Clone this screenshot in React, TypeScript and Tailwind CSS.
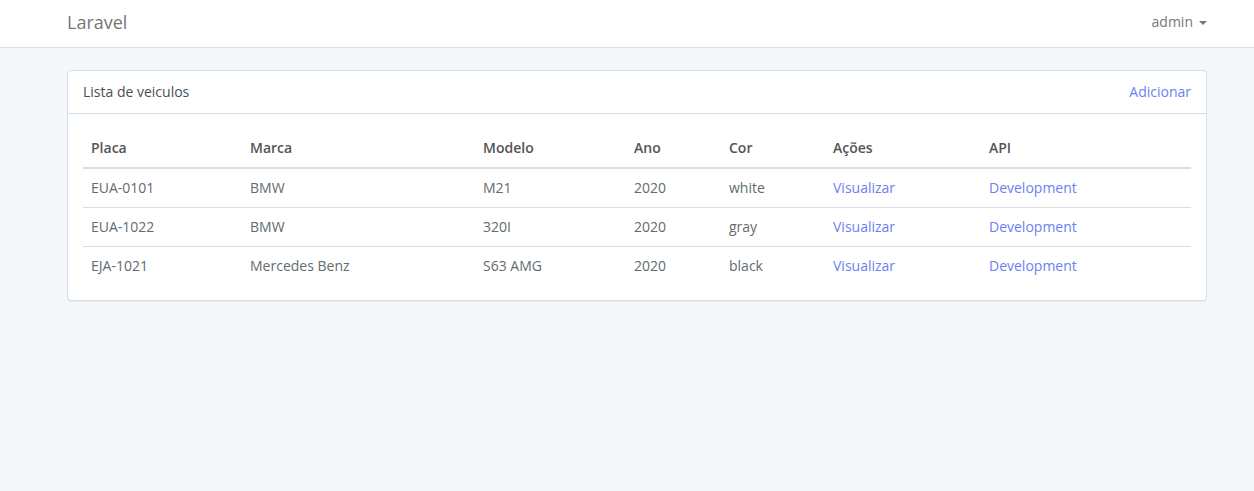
import React from "react";

const veiculos = [
  { placa: "EUA-0101", marca: "BMW", modelo: "M21", ano: "2020", cor: "white" },
  { placa: "EUA-1022", marca: "BMW", modelo: "320I", ano: "2020", cor: "gray" },
  { placa: "EJA-1021", marca: "Mercedes Benz", modelo: "S63 AMG", ano: "2020", cor: "black" },
];

const App = () => {
  return (
    <div className="min-h-[491px] bg-[#f5f8fa] text-[14px] leading-[22px] text-[#636b6f] font-['Open_Sans',sans-serif]">
      <nav className="h-[48px] bg-white border-b border-[#d3e0e9]">
        <div className="ml-[67px] w-[1140px] h-[47px] pb-[4px] flex items-center justify-between">
          <a className="text-[18px] text-[#777]">Laravel</a>
          <a className="flex items-center gap-[6px] text-[#777]">
            admin
            <span className="w-0 h-0 border-x-[4px] border-x-transparent border-t-[4px] border-t-[#777] mt-[2px]" />
          </a>
        </div>
      </nav>

      <div className="ml-[67px] w-[1140px] mt-[22px]">
        <div className="bg-white border border-[#d3e0e9] rounded-[4px] shadow-[0_1px_1px_rgba(0,0,0,0.05)]">
          <div className="h-[43px] px-[15px] flex items-center justify-between border-b border-[#d3e0e9] text-[#4a4f52]">
            <span>Lista de veiculos</span>
            <a className="text-[#6b7ff2]">Adicionar</a>
          </div>
          <div className="p-[15px]">
            <table className="w-full border-collapse text-left">
              <thead>
                <tr className="text-[#555]">
                  <th className="w-[159px] px-[8px] py-[8px] font-semibold border-b-2 border-[#ddd]">Placa</th>
                  <th className="w-[233px] px-[8px] py-[8px] font-semibold border-b-2 border-[#ddd]">Marca</th>
                  <th className="w-[151px] px-[8px] py-[8px] font-semibold border-b-2 border-[#ddd]">Modelo</th>
                  <th className="w-[95px] px-[8px] py-[8px] font-semibold border-b-2 border-[#ddd]">Ano</th>
                  <th className="w-[104px] px-[8px] py-[8px] font-semibold border-b-2 border-[#ddd]">Cor</th>
                  <th className="w-[156px] px-[8px] py-[8px] font-semibold border-b-2 border-[#ddd]">Ações</th>
                  <th className="px-[8px] py-[8px] font-semibold border-b-2 border-[#ddd]">API</th>
                </tr>
              </thead>
              <tbody>
                {veiculos.map((v, i) => (
                  <tr key={v.placa} className={i > 0 ? "border-t border-[#ddd]" : ""}>
                    <td className="px-[8px] py-[8px]">{v.placa}</td>
                    <td className="px-[8px] py-[8px]">{v.marca}</td>
                    <td className="px-[8px] py-[8px]">{v.modelo}</td>
                    <td className="px-[8px] py-[8px]">{v.ano}</td>
                    <td className="px-[8px] py-[8px]">{v.cor}</td>
                    <td className="px-[8px] py-[8px]">
                      <a className="text-[#6b7ff2]">Visualizar</a>
                    </td>
                    <td className="px-[8px] py-[8px]">
                      <a className="text-[#6b7ff2]">Development</a>
                    </td>
                  </tr>
                ))}
              </tbody>
            </table>
          </div>
        </div>
      </div>
    </div>
  );
};

export default App;
